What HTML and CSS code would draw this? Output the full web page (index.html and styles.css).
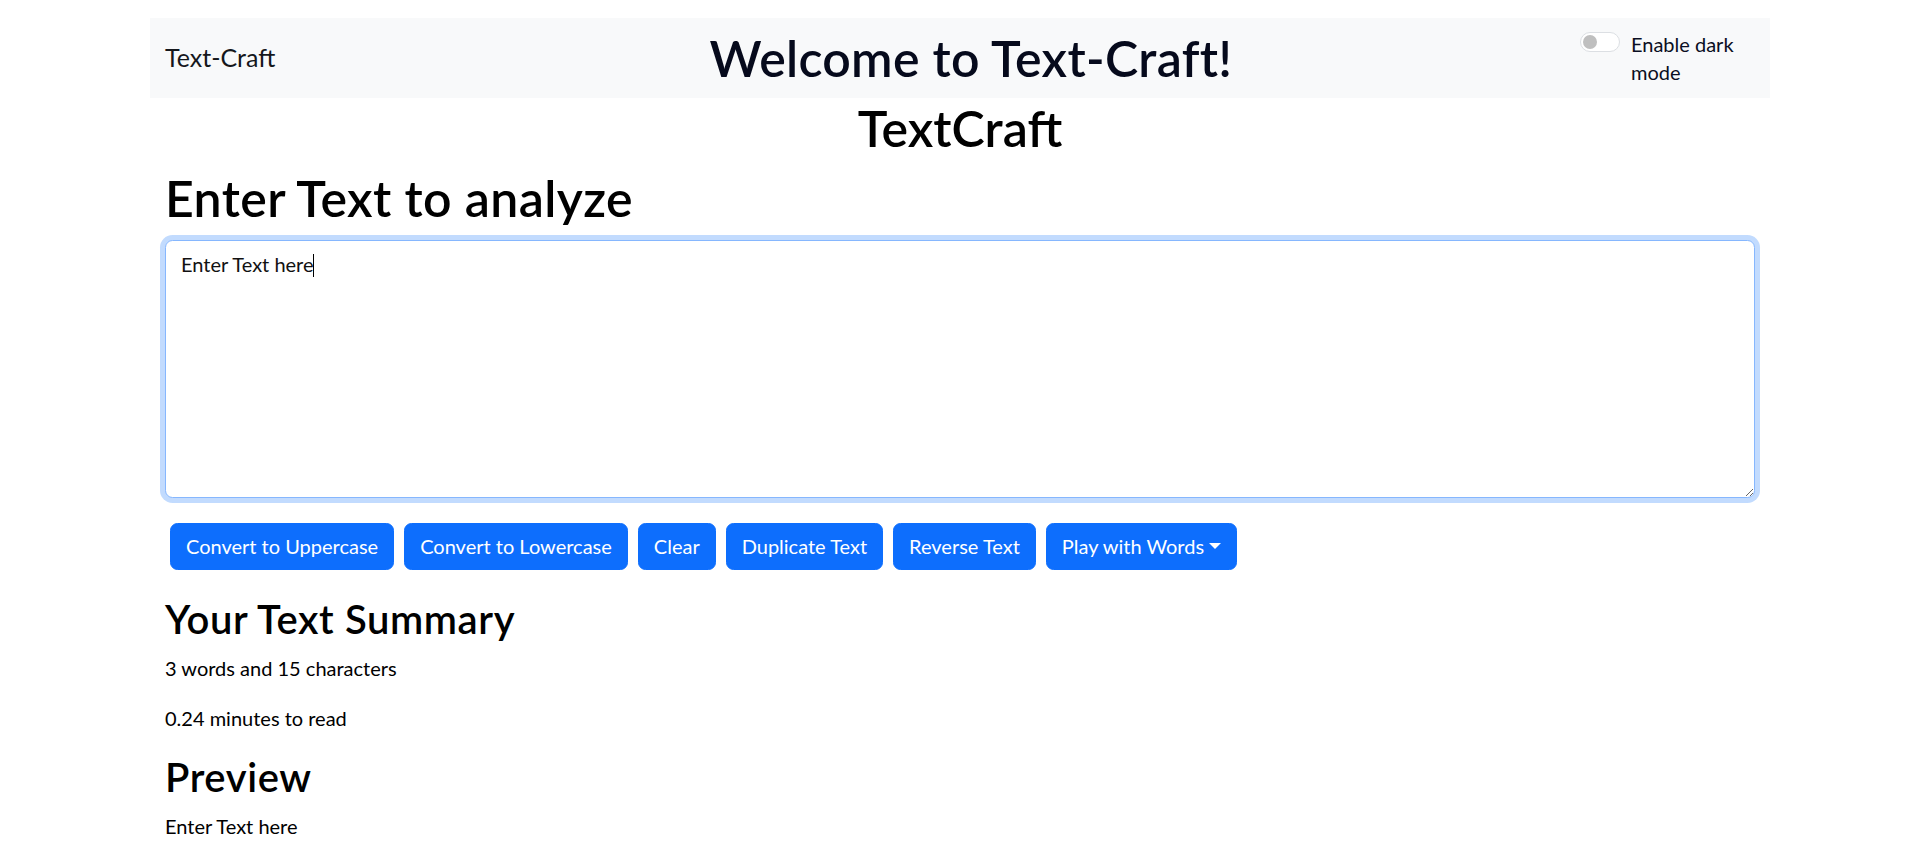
FILE: index.html
```html
<!DOCTYPE html>
<html lang="en">
<head>
<meta charset="utf-8">
<title>TextCraft</title>
<link rel="stylesheet" href="styles.css">
</head>
<body>
<div class="page">
  <nav class="navbar">
    <a class="brand" href="#">Text-Craft</a>
    <h1 class="welcome">Welcome to Text-Craft!</h1>
    <div class="switch">
      <span class="switch-input" aria-hidden="true"><span class="knob"></span></span>
      <label class="switch-label">Enable dark mode</label>
    </div>
  </nav>
  <h1 class="app-title">TextCraft</h1>
  <main class="content">
    <h1 class="heading">Enter Text to analyze</h1>
    <div class="textarea-wrap">
      <textarea class="text-input" rows="8">Enter Text here</textarea>
      <span class="caret" aria-hidden="true"></span>
    </div>
    <div class="btn-row">
      <button class="btn" type="button">Convert to Uppercase</button>
      <button class="btn" type="button">Convert to Lowercase</button>
      <button class="btn" type="button">Clear</button>
      <button class="btn" type="button">Duplicate Text</button>
      <button class="btn" type="button">Reverse Text</button>
      <button class="btn dropdown-toggle" type="button">Play with Words</button>
    </div>
    <section class="summary">
      <h2 class="sub">Your Text Summary</h2>
      <p class="line">3 words and 15 characters</p>
      <p class="line">0.24 minutes to read</p>
      <h2 class="sub">Preview</h2>
      <p class="line">Enter Text here</p>
    </section>
  </main>
</div>
</body>
</html>
```
FILE: styles.css
```css
* {
  box-sizing: border-box;
}

html,
body {
  margin: 0;
  padding: 0;
}

body {
  font-family: "Lato", "Open Sans", sans-serif;
  font-size: 20px;
  line-height: 30px;
  color: #000;
  background: #fff;
}

.page {
  width: 1620px;
  margin: 0 auto;
  padding-top: 18px;
}

/* ---------- navbar ---------- */
.navbar {
  display: flex;
  align-items: center;
  height: 80px;
  padding: 10px 15px;
  background: #f8f9fa;
}

.brand {
  flex: none;
  width: 197px;
  font-size: 25px;
  line-height: 37.5px;
  color: #15171c;
  text-decoration: none;
}

.welcome {
  flex: 1;
  margin: 0;
  text-align: center;
  font-size: 50px;
  line-height: 60px;
  font-weight: 600;
  letter-spacing: 0.3px;
  color: #060a1c;
}

.switch {
  flex: none;
  width: 175px;
  display: flex;
  align-items: flex-start;
  color: #0a0e22;
  line-height: 28px;
}

.switch-input {
  flex: none;
  position: relative;
  width: 40px;
  height: 20px;
  margin-top: 2px;
  border: 1.25px solid #dcdfe3;
  border-radius: 10px;
  background: #fff;
}

.knob {
  position: absolute;
  left: 2px;
  top: 2px;
  width: 14px;
  height: 14px;
  border-radius: 50%;
  background: #bfbfbf;
}

.switch-label {
  margin-left: 11px;
}

/* ---------- titles ---------- */
.app-title {
  margin: 0 0 10px;
  text-align: center;
  font-size: 50px;
  line-height: 60px;
  font-weight: 600;
}

.content {
  padding: 0 15px;
}

.heading {
  margin: 0 0 12px;
  font-size: 50px;
  line-height: 60px;
  font-weight: 600;
  letter-spacing: 0.4px;
}

/* ---------- textarea ---------- */
.textarea-wrap {
  position: relative;
  margin-bottom: 20px;
}

.text-input {
  display: block;
  width: 100%;
  height: 257.5px;
  padding: 7.5px 15px;
  font-family: inherit;
  font-size: 20px;
  line-height: 30px;
  color: #111;
  background: #fff;
  border: 1.25px solid #86b7fe;
  border-radius: 7.5px;
  box-shadow: 0 0 0 5px rgba(13, 110, 253, 0.25);
  outline: none;
  resize: vertical;
}

.caret {
  position: absolute;
  left: 148px;
  top: 14px;
  width: 1.25px;
  height: 23px;
  background: #000;
}

/* ---------- buttons ---------- */
.btn-row {
  display: flex;
  flex-wrap: wrap;
  gap: 10px;
  padding: 5px;
}

.btn {
  font-family: inherit;
  font-size: 20px;
  line-height: 30px;
  padding: 7.5px 15px;
  color: #fff;
  background: #0d6efd;
  border: 1.25px solid #0d6efd;
  border-radius: 7.5px;
  cursor: pointer;
}

.dropdown-toggle::after {
  content: "";
  display: inline-block;
  margin-left: 5px;
  vertical-align: 5px;
  border-top: 6px solid #fff;
  border-left: 6px solid transparent;
  border-right: 6px solid transparent;
}

/* ---------- summary ---------- */
.summary {
  margin: 20px 0;
}

.sub {
  margin: 0 0 10px;
  font-size: 40px;
  line-height: 48px;
  font-weight: 600;
  letter-spacing: 0.6px;
}

.line {
  margin: 0 0 20px;
}
```
